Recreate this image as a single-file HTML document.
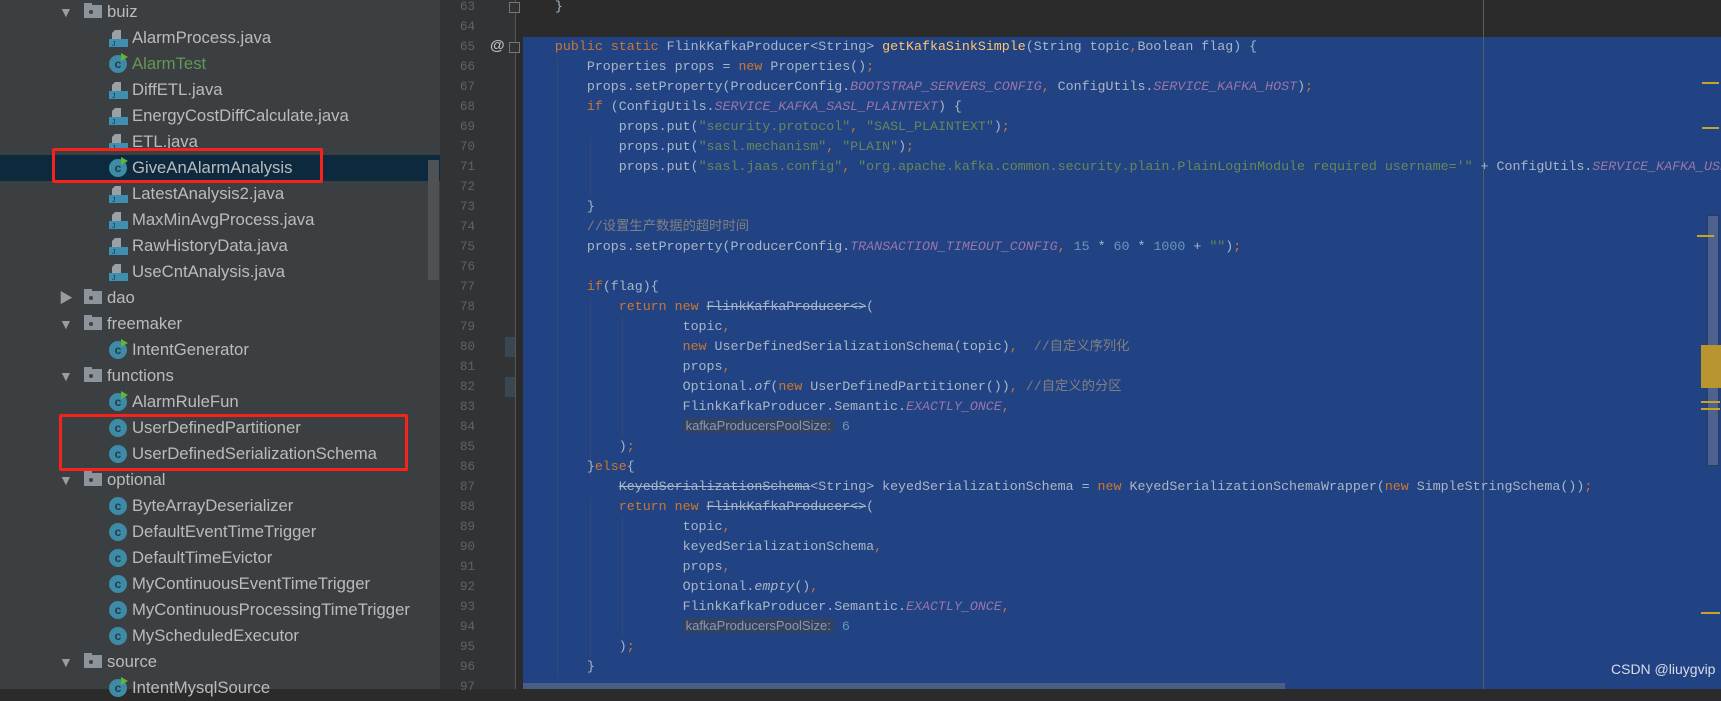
<!DOCTYPE html>
<html><head><meta charset="utf-8"><style>
*{margin:0;padding:0;box-sizing:border-box}
body{width:1721px;height:689px;overflow:hidden;background:#2b2b2b;position:relative;font-family:"Liberation Sans","Noto Sans CJK SC",sans-serif}
#side{position:absolute;left:0;top:0;width:440px;height:689px;background:#3c3f41}
.row{position:absolute;left:0;width:440px;height:26px;font-size:16.7px;color:#bbbbbb;line-height:26px;white-space:nowrap}
.row .t{position:absolute}
.arr{position:absolute;left:59px;top:0;font-size:14px;color:#9a9da0}
.fold{position:absolute;left:84px;top:6px;width:18px;height:13px;background:#8d939a}
.fold:before{content:"";position:absolute;left:0;top:-2px;width:8px;height:3px;background:#8d939a}
.fold:after{content:"";position:absolute;left:5px;top:5px;width:4px;height:4px;border-radius:2px;background:#3c3f41}
.jf{position:absolute;left:109px;top:4px;width:19px;height:19px}
.ci{position:absolute;left:109px;top:4px;width:18px;height:18px;border-radius:50%;background:#3d8ba6;color:#1f3b47;font:bold 12px "Liberation Sans",sans-serif;text-align:center;line-height:18px}
.run{position:absolute;left:121px;top:2px;width:0;height:0;border-left:7px solid #5fb636;border-top:4px solid transparent;border-bottom:4px solid transparent}
.box{position:absolute;border:3px solid #f5231b;border-radius:2px}
#gut{position:absolute;left:440px;top:0;width:76px;height:689px;background:#313335}
.ln{position:absolute;left:449px;width:26px;text-align:right;font:12.5px "Liberation Mono",monospace;color:#606366;line-height:20px}
#code{position:absolute;left:523px;top:37px;width:1198px;height:652px;background:#214283}
.cl{position:absolute;left:523px;font:13.3px "Liberation Mono","Noto Sans CJK SC",monospace;color:#a9b7c6;white-space:pre;line-height:20px}
.k{color:#cc7832}.s{color:#6a8759}.c{color:#9876aa;font-style:italic}.m{color:#ffc66d}.n{color:#6897bb}.cm{color:#808080}.st{text-decoration:line-through}
.i{font-style:italic}
.hint{font:13px "Liberation Sans",sans-serif;background:#344262;color:#8e97a8;padding:0 3px;border-radius:3px}
.g{position:absolute;width:1px;background:#33497a}
.mk{position:absolute;background:#c9a227;height:2px}
</style></head><body>
<div id="side">
<div class="row" style="top:-1px"><span class="arr">▼</span><span class="fold"></span><span class="t" style="left:107px">buiz</span></div>
<div class="row" style="top:155px;background:#0d293e"></div>
</div>
<div style="position:absolute;left:428px;top:160px;width:11px;height:120px;background:#4e5254"></div>
<div class="box" style="left:52px;top:148px;width:271px;height:35px"></div>
<div class="box" style="left:59px;top:414px;width:349px;height:57px"></div>
<div id="gut"></div>
<div style="position:absolute;left:515px;top:0;width:1px;height:689px;background:#555"></div>
<div style="position:absolute;left:505px;top:337px;width:10px;height:20px;background:#3a4750"></div>
<div style="position:absolute;left:505px;top:377px;width:10px;height:20px;background:#3a4750"></div>
<div style="position:absolute;left:490px;top:37px;font:bold 15px 'Liberation Sans';color:#bbb">@</div>
<div style="position:absolute;left:509px;top:2px;width:11px;height:11px;border:1px solid #777;background:#313335"></div>
<div style="position:absolute;left:509px;top:42px;width:11px;height:11px;border:1px solid #777;background:#313335"></div>
<div id="code"></div>
<div style="position:absolute;left:1483px;top:0;width:1px;height:689px;background:#555c6a"></div>
<div class="g" style="left:557px;top:57px;height:620px"></div>
<div class="g" style="left:590px;top:137px;height:60px"></div>
<div class="g" style="left:590px;top:297px;height:180px"></div>
<div class="g" style="left:622px;top:317px;height:120px"></div>
<div class="g" style="left:590px;top:497px;height:160px"></div>
<div class="g" style="left:622px;top:517px;height:120px"></div>
<div id="lines"></div>
<div style="position:absolute;left:1707px;top:215px;width:12px;height:251px;background:#4e6290;border:1px solid #2c3a5c"></div>
<div class="mk" style="left:1702px;top:82px;width:17px"></div>
<div class="mk" style="left:1702px;top:127px;width:17px"></div>
<div class="mk" style="left:1697px;top:235px;width:17px"></div>
<div style="position:absolute;left:1701px;top:345px;width:20px;height:43px;background:#b8952e"></div>
<div class="mk" style="left:1701px;top:401px;width:19px"></div>
<div class="mk" style="left:1701px;top:408px;width:19px"></div>
<div class="mk" style="left:1701px;top:612px;width:19px"></div>
<div style="position:absolute;left:523px;top:683px;width:762px;height:6px;background:#4a5d85"></div>
<div style="position:absolute;left:1611px;top:661px;font:14px 'Liberation Sans';color:#d8dde8">CSDN @liuygvip</div>
<script>
var items=[
[0,'f','buiz'],[1,'j','AlarmProcess.java'],[1,'r','AlarmTest','#629755'],[1,'j','DiffETL.java'],[1,'j','EnergyCostDiffCalculate.java'],[1,'j','ETL.java'],[1,'r','GiveAnAlarmAnalysis'],[1,'j','LatestAnalysis2.java'],[1,'j','MaxMinAvgProcess.java'],[1,'j','RawHistoryData.java'],[1,'j','UseCntAnalysis.java'],
[0,'d','dao'],[0,'f','freemaker'],[1,'r','IntentGenerator'],[0,'f','functions'],[1,'r','AlarmRuleFun'],[1,'c','UserDefinedPartitioner'],[1,'c','UserDefinedSerializationSchema'],
[0,'f','optional'],[1,'c','ByteArrayDeserializer'],[1,'c','DefaultEventTimeTrigger'],[1,'c','DefaultTimeEvictor'],[1,'c','MyContinuousEventTimeTrigger'],[1,'c','MyContinuousProcessingTimeTrigger'],[1,'c','MyScheduledExecutor'],[0,'f','source'],[1,'r','IntentMysqlSource']];
var h='';
items.forEach(function(it,i){
 if(i==0)return;
 var top=-1+26*i, s='<div class="row" style="top:'+top+'px">';
 if(it[0]==0){s+='<span class="arr">'+(it[1]=='d'?'▶':'▼')+'</span><span class="fold"></span><span class="t" style="left:107px">'+it[2]+'</span>';}
 else{
  if(it[1]=='j')s+='<svg class="jf" viewBox="0 0 19 19"><path d="M6 1h6v9H3V4z" fill="#9aa0a6"/><rect x="0" y="10" width="19" height="8" fill="#3f8fb0"/><text x="3" y="17" font-size="7" fill="#1d3440" font-family="Liberation Sans">J</text></svg>';
  else s+='<span class="ci">c</span>'+(it[1]=='r'?'<span class="run"></span>':'');
  s+='<span class="t" style="left:132px'+(it[3]?';color:'+it[3]:'')+'">'+it[2]+'</span>';
 }
 h+=s+'</div>';
});
document.getElementById('side').insertAdjacentHTML('beforeend',h);
var L={
63:'    }',64:'',
65:'    <span class="k">public static </span>FlinkKafkaProducer&lt;String&gt; <span class="m">getKafkaSinkSimple</span>(String topic<span class="k">,</span>Boolean flag) {',
66:'        Properties props = <span class="k">new </span>Properties()<span class="k">;</span>',
67:'        props.setProperty(ProducerConfig.<span class="c">BOOTSTRAP_SERVERS_CONFIG</span><span class="k">, </span>ConfigUtils.<span class="c">SERVICE_KAFKA_HOST</span>)<span class="k">;</span>',
68:'        <span class="k">if </span>(ConfigUtils.<span class="c">SERVICE_KAFKA_SASL_PLAINTEXT</span>) {',
69:'            props.put(<span class="s">"security.protocol"</span><span class="k">, </span><span class="s">"SASL_PLAINTEXT"</span>)<span class="k">;</span>',
70:'            props.put(<span class="s">"sasl.mechanism"</span><span class="k">, </span><span class="s">"PLAIN"</span>)<span class="k">;</span>',
71:'            props.put(<span class="s">"sasl.jaas.config"</span><span class="k">, </span><span class="s">"org.apache.kafka.common.security.plain.PlainLoginModule required username=\'"</span> + ConfigUtils.<span class="c">SERVICE_KAFKA_USER</span>',
72:'',73:'        }',
74:'        <span class="cm">//设置生产数据的超时时间</span>',
75:'        props.setProperty(ProducerConfig.<span class="c">TRANSACTION_TIMEOUT_CONFIG</span><span class="k">, </span><span class="n">15 </span>* <span class="n">60 </span>* <span class="n">1000 </span>+ <span class="s">""</span>)<span class="k">;</span>',
76:'',
77:'        <span class="k">if</span>(flag){',
78:'            <span class="k">return new </span><span class="st">FlinkKafkaProducer&lt;&gt;</span>(',
79:'                    topic<span class="k">,</span>',
80:'                    <span class="k">new </span>UserDefinedSerializationSchema(topic)<span class="k">,  </span><span class="cm">//自定义序列化</span>',
81:'                    props<span class="k">,</span>',
82:'                    Optional.<span class="i">of</span>(<span class="k">new </span>UserDefinedPartitioner())<span class="k">, </span><span class="cm">//自定义的分区</span>',
83:'                    FlinkKafkaProducer.Semantic.<span class="c">EXACTLY_ONCE</span><span class="k">,</span>',
84:'                    <span class="hint">kafkaProducersPoolSize:</span> <span class="n">6</span>',
85:'            )<span class="k">;</span>',
86:'        }<span class="k">else</span>{',
87:'            <span class="st">KeyedSerializationSchema</span>&lt;String&gt; keyedSerializationSchema = <span class="k">new </span>KeyedSerializationSchemaWrapper(<span class="k">new </span>SimpleStringSchema())<span class="k">;</span>',
88:'            <span class="k">return new </span><span class="st">FlinkKafkaProducer&lt;&gt;</span>(',
89:'                    topic<span class="k">,</span>',
90:'                    keyedSerializationSchema<span class="k">,</span>',
91:'                    props<span class="k">,</span>',
92:'                    Optional.<span class="i">empty</span>()<span class="k">,</span>',
93:'                    FlinkKafkaProducer.Semantic.<span class="c">EXACTLY_ONCE</span><span class="k">,</span>',
94:'                    <span class="hint">kafkaProducersPoolSize:</span> <span class="n">6</span>',
95:'            )<span class="k">;</span>',
96:'        }',97:''};
var o='';
for(var n=63;n<=97;n++){var t=-3+(n-63)*20;
 o+='<div class="ln" style="top:'+t+'px">'+n+'</div><div class="cl" style="top:'+t+'px">'+L[n]+'</div>';}
document.getElementById('lines').innerHTML=o;
</script>
</body></html>
